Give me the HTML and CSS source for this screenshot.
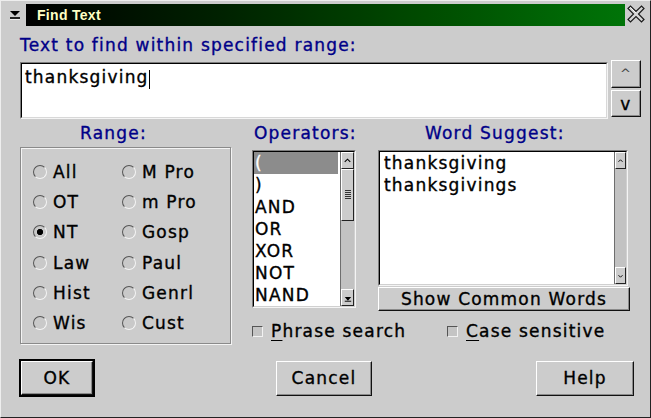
FILE: index.html
```html
<!DOCTYPE html>
<html>
<head>
<meta charset="utf-8">
<title>Find Text</title>
<link rel="stylesheet" href="styles.css">
</head>
<body>
<div class="window">
  <div class="titlerow">
    <div class="menuicon">
      <svg width="25" height="22" viewBox="0 0 25 22">
        <polygon points="9,7 19,7 14,12" fill="#000"/>
        <rect x="9" y="13" width="10" height="2" fill="#222"/>
        <rect x="9" y="15" width="10" height="1" fill="#eee"/>
      </svg>
    </div>
    <div class="titlebar"><span class="title">Find Text</span></div>
    <div class="closebtn">
      <svg width="24" height="22" viewBox="0 0 24 22">
        <polygon points="3,4.5 5.5,2 11,7.5 16.5,2 19,4.5 13.5,10 19,15.5 16.5,18 11,12.5 5.5,18 3,15.5 8.5,10" fill="#d6d6d6" stroke="#1a1a1a" stroke-width="1.2" stroke-linejoin="miter"/>
        <polyline points="4.5,4.5 5.5,3.5 11,9" fill="none" stroke="#fff" stroke-width="0.8"/>
      </svg>
    </div>
  </div>

  <div class="content">
    <div class="biglabel">Text to find within specified range:</div>

    <div class="inputrow">
      <div class="textinput"><div class="textinner"><span>thanksgiving</span><span class="caret"></span></div></div>
      <div class="updown">
        <div class="btn updbtn upbtn">^</div>
        <div class="btn updbtn downbtn">v</div>
      </div>
    </div>

    <div class="middle">
      <div class="col rangecol">
        <div class="label rangelabel">Range:</div>
        <div class="groupbox">
          <div class="radiogrid">
            <div class="radio"><span class="circle"></span>All</div>
            <div class="radio"><span class="circle"></span>OT</div>
            <div class="radio"><span class="circle on"></span>NT</div>
            <div class="radio"><span class="circle"></span>Law</div>
            <div class="radio"><span class="circle"></span>Hist</div>
            <div class="radio"><span class="circle"></span>Wis</div>
            <div class="radio"><span class="circle"></span>M Pro</div>
            <div class="radio"><span class="circle"></span>m Pro</div>
            <div class="radio"><span class="circle"></span>Gosp</div>
            <div class="radio"><span class="circle"></span>Paul</div>
            <div class="radio"><span class="circle"></span>Genrl</div>
            <div class="radio"><span class="circle"></span>Cust</div>
          </div>
        </div>
      </div>

      <div class="rightside">
        <div class="lists">
          <div class="col opscol">
            <div class="label opslabel">Operators:</div>
            <div class="listbox opslist">
              <div class="listinner">
                <div class="items opsitems">
                  <div class="item sel">(</div>
                  <div class="item">)</div>
                  <div class="item">AND</div>
                  <div class="item">OR</div>
                  <div class="item">XOR</div>
                  <div class="item">NOT</div>
                  <div class="item">NAND</div>
                </div>
                <div class="sb">
                  <div class="sbbtn">
                    <svg width="12" height="14" viewBox="0 0 12 14"><polyline points="3,8 6,5 9,8" fill="none" stroke="#000" stroke-width="1.2"/></svg>
                  </div>
                  <div class="thumb"><div class="grip"></div></div>
                  <div class="track"></div>
                  <div class="sbbtn">
                    <svg width="12" height="14" viewBox="0 0 12 14"><polygon points="3,6 10,6 6.5,10" fill="#000"/><rect x="3" y="10" width="7" height="1" fill="#000"/></svg>
                  </div>
                </div>
              </div>
            </div>
          </div>

          <div class="col wordscol">
            <div class="label wordslabel">Word Suggest:</div>
            <div class="listbox wordslist">
              <div class="listinner">
                <div class="items wordsitems">
                  <div class="item">thanksgiving</div>
                  <div class="item">thanksgivings</div>
                </div>
                <div class="sb sbw">
                  <div class="sbbtn">
                    <svg width="11" height="14" viewBox="0 0 11 14"><polyline points="3,8 5.5,5.5 8,8" fill="none" stroke="#000" stroke-width="1.1"/></svg>
                  </div>
                  <div class="track"></div>
                  <div class="sbbtn">
                    <svg width="11" height="14" viewBox="0 0 11 14"><polyline points="3,6 5.5,8.5 8,6" fill="none" stroke="#000" stroke-width="1.1"/></svg>
                  </div>
                </div>
              </div>
            </div>
            <div class="btn commonbtn">Show Common Words</div>
          </div>
        </div>

        <div class="checks">
          <div class="check phrase"><span class="box"></span><u>P</u>hrase search</div>
          <div class="check"><span class="box"></span><u>C</u>ase sensitive</div>
        </div>
      </div>
    </div>

    <div class="buttons">
      <div class="okwrap"><div class="btn okbtn">OK</div></div>
      <div class="btn cancelbtn">Cancel</div>
      <div class="btn helpbtn">Help</div>
    </div>
  </div>
</div>
</body>
</html>
```

FILE: styles.css
```css
* { box-sizing: border-box; }

html, body {
  margin: 0;
  padding: 0;
  background: #cccccc;
}

body {
  font-family: "DejaVu Sans", "Liberation Sans", sans-serif;
  font-size: 17px;
  letter-spacing: 1.2px;
  color: #000;
  -webkit-text-stroke: 0.35px currentColor;
}

.window {
  width: 651px;
  height: 418px;
  background: #cccccc;
  border-style: solid;
  border-width: 1px;
  border-color: #eeeeee #222222 #222222 #eeeeee;
  overflow: hidden;
}

/* ---------- title bar ---------- */
.titlerow {
  display: flex;
  height: 26px;
  padding-top: 3px;
}

.menuicon {
  width: 25px;
  height: 22px;
}

.menuicon svg, .closebtn svg { display: block; }

.titlebar {
  width: 599px;
  height: 22px;
  background: linear-gradient(to right, #000000 0%, #002200 33%, #004c00 67%, #007408 100%);
  display: flex;
  align-items: center;
  padding-left: 11px;
}

.title {
  font-family: "Liberation Sans", sans-serif;
  font-weight: bold;
  font-size: 14px;
  letter-spacing: 0.3px;
  color: #ffffc4;
  -webkit-text-stroke: 0;
}

.closebtn {
  width: 24px;
  height: 22px;
}

/* ---------- content ---------- */
.content {
  padding-left: 19px;
}

.biglabel, .label {
  color: #000088;
  line-height: 20px;
  height: 20px;
  white-space: nowrap;
}

.biglabel {
  margin-top: 8px;
}

.inputrow {
  display: flex;
  align-items: flex-start;
  margin-top: 7px;
}

.textinput {
  width: 588px;
  height: 57px;
  border: 1px solid;
  border-color: #7c7c7c #f4f4f4 #f4f4f4 #7c7c7c;
}

.textinner {
  height: 100%;
  background: #fff;
  border: 1px solid;
  border-color: #000 #d8d8d8 #d8d8d8 #000;
  padding: 3px 0 0 3px;
  line-height: 20px;
  display: flex;
  align-items: flex-start;
}

.caret {
  display: inline-block;
  width: 1px;
  height: 19px;
  background: #000;
  margin-top: 3px;
}

.updown {
  display: flex;
  flex-direction: column;
  gap: 2px;
  margin-left: 3px;
  margin-top: -2px;
}

/* raised button */
.btn {
  background: #cccccc;
  border: 1px solid;
  border-color: #ffffff #111111 #111111 #ffffff;
  box-shadow: inset -1px -1px 0 #8a8a8a;
  display: flex;
  align-items: center;
  justify-content: center;
  line-height: 20px;
  white-space: nowrap;
}

.updbtn {
  width: 30px;
  height: 28px;
}

.upbtn {
  font-size: 13px;
  color: #444;
  align-items: flex-start;
  padding-top: 3px;
  -webkit-text-stroke: 0;
}

.downbtn {
  height: 27px;
  font-size: 17px;
  padding-top: 1px;
}

/* ---------- middle ---------- */
.middle {
  display: flex;
  align-items: flex-start;
  margin-top: 4px;
}

.col {
  display: flex;
  flex-direction: column;
}

.rangecol {
  width: 211px;
}

.rangelabel { padding-left: 60px; }

.groupbox {
  margin-top: 4px;
  height: 197px;
  border: 1px solid #8a8a8a;
  box-shadow: inset 1px 1px 0 #f4f4f4, 1px 1px 0 #f4f4f4;
}

.radiogrid {
  display: grid;
  grid-template-columns: 89px auto;
  grid-template-rows: repeat(6, 30.2px);
  grid-auto-flow: column;
  padding: 9px 0 0 12px;
}

.radio {
  display: flex;
  align-items: center;
  gap: 6px;
  white-space: nowrap;
  line-height: 20px;
}

.circle {
  width: 14px;
  height: 14px;
  border-radius: 50%;
  background: #c9c9c9;
  border: 1px solid;
  border-color: #555 #f4f4f4 #f4f4f4 #555;
  flex: none;
}

.circle.on {
  background: radial-gradient(circle, #000 0 2.8px, #c9c9c9 3.4px);
}

.rightside {
  display: flex;
  flex-direction: column;
  margin-left: 21px;
}

.lists {
  display: flex;
  align-items: flex-start;
}

.opscol { width: 104px; }
.opslabel { padding-left: 2px; }

.wordscol {
  width: 252px;
  margin-left: 22px;
}
.wordslabel { padding-left: 47px; }

.listbox {
  margin-top: 7px;
  border: 1px solid;
  border-color: #7c7c7c #f4f4f4 #f4f4f4 #7c7c7c;
}

.opslist { height: 158px; }
.wordslist { height: 136px; width: 250px; }

.listinner {
  height: 100%;
  display: flex;
  border: 1px solid;
  border-color: #000 #d0d0d0 #d0d0d0 #000;
  background: #fff;
}

.items {
  flex: 1;
  background: #fff;
  padding-right: 2px;
  overflow: hidden;
}

.item {
  height: 22px;
  line-height: 22px;
  white-space: nowrap;
}

.opsitems .item { padding-left: 1px; }
.wordsitems .item { padding-left: 4px; }

.item.sel {
  background: #8c8c8c;
  color: #fff;
}

.sb {
  width: 14px;
  display: flex;
  flex-direction: column;
  background: #c2c2c2;
  border-left: 1px solid #6e6e6e;
}

.sbw { width: 12px; }

.sbbtn {
  height: 17px;
  background: #cccccc;
  border: 1px solid;
  border-color: #fff #222 #222 #fff;
  display: flex;
  align-items: center;
  justify-content: center;
  flex: none;
}

.sbbtn svg { display: block; }

.thumb {
  height: 52px;
  background: #cccccc;
  border: 1px solid;
  border-color: #fff #222 #222 #fff;
  display: flex;
  align-items: center;
  justify-content: center;
  flex: none;
}

.grip {
  width: 6px;
  height: 10px;
  background: repeating-linear-gradient(to bottom, #333 0 1px, transparent 1px 2px);
}

.track { flex: 1; }

.commonbtn {
  margin-top: 1px;
  height: 24px;
  width: 252px;
}

.checks {
  display: flex;
  margin-top: 10px;
  height: 20px;
  line-height: 20px;
}

.check {
  display: flex;
  align-items: center;
  white-space: nowrap;
}

.check.phrase { width: 195px; }

.check u {
  text-decoration-thickness: 1px;
  text-underline-offset: 3px;
}

.box {
  width: 11px;
  height: 11px;
  background: #c4c4c4;
  border: 1px solid;
  border-color: #555 #f2f2f2 #f2f2f2 #555;
  margin-right: 8px;
  flex: none;
}

/* ---------- bottom buttons ---------- */
.buttons {
  display: flex;
  align-items: center;
  margin-top: 15px;
  margin-left: -1px;
}

.okwrap {
  border: 2px solid #000;
  width: 76px;
  height: 38px;
}

.okbtn {
  width: 100%;
  height: 100%;
}

.cancelbtn {
  margin-left: 181px;
  width: 96px;
  height: 35px;
}

.helpbtn {
  margin-left: 164px;
  width: 98px;
  height: 35px;
}
```
